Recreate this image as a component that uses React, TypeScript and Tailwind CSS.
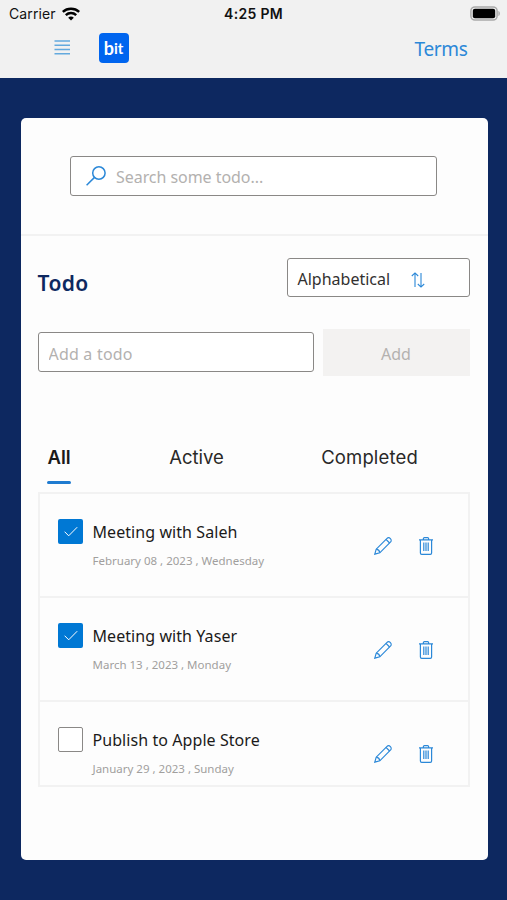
import React, { useState } from 'react';

interface Todo {
  id: number;
  title: string;
  date: string;
  done: boolean;
}

const initialTodos: Todo[] = [
  { id: 1, title: 'Meeting with Saleh', date: 'February 08 , 2023 , Wednesday', done: true },
  { id: 2, title: 'Meeting with Yaser', date: 'March 13 , 2023 , Monday', done: true },
  { id: 3, title: 'Publish to Apple Store', date: 'January 29 , 2023 , Sunday', done: false },
];

const WifiIcon = () => (
  <svg width="18" height="14" viewBox="0 0 18 14" fill="none" stroke="#000" strokeWidth="2.5">
    <path d="M0.8 4.9C5.3 0.7 12.7 0.7 17.2 4.9" />
    <path d="M3.8 8.1C6.8 5.4 11.2 5.4 14.2 8.1" />
    <path d="M9 13.4L6.2 10.7C7.8 9.2 10.2 9.2 11.8 10.7Z" fill="#000" stroke="none" />
  </svg>
);

const BatteryIcon = () => (
  <svg width="31" height="15" viewBox="0 0 31 15" fill="none">
    <rect x="0.9" y="0.9" width="26.2" height="13.2" rx="4" stroke="#a9a9a9" strokeWidth="1.5" />
    <rect x="2.8" y="2.8" width="22.4" height="9.4" rx="2" fill="#000" />
    <path d="M28.4 5C30.4 5.6 30.4 9.4 28.4 10Z" fill="#a9a9a9" />
  </svg>
);

const MenuIcon = () => (
  <svg width="16" height="16" viewBox="0 0 16 16" stroke="#63a9de" strokeWidth="1.5">
    <path d="M0.5 1H16M0.5 5.3H16M0.5 9.5H16M0.5 13.8H16" />
  </svg>
);

const SearchIcon = () => (
  <svg width="20" height="20" viewBox="0 0 20 20" fill="none" stroke="#2b88d8" strokeWidth="1.5">
    <circle cx="12.9" cy="7" r="6.2" />
    <path d="M8.5 11.4L0.6 19.3" />
  </svg>
);

const SortIcon = () => (
  <svg width="14" height="16" viewBox="0 0 14 16" fill="none" stroke="#2b88d8" strokeWidth="1.1">
    <path d="M4 15V1M0.8 4L4 0.9L7.2 4" />
    <path d="M10 1V15M6.8 12L10 15.1L13.2 12" />
  </svg>
);

const EditIcon = () => (
  <svg width="18" height="18" viewBox="0 0 18 18" fill="none" stroke="#2b88d8" strokeWidth="1.2">
    <path d="M0.8 17.2L2.2 12.2L12.8 1.6C13.8 0.6 15.4 0.6 16.4 1.6C17.4 2.6 17.4 4.2 16.4 5.2L5.8 15.8Z" />
    <path d="M12 2.4L15.6 6M2.2 12.2C4 12.4 5.6 14 5.8 15.8" />
  </svg>
);

const DeleteIcon = () => (
  <svg width="14" height="18" viewBox="0 0 14 18" fill="none" stroke="#2b88d8" strokeWidth="1.2">
    <path d="M0 2.9H14M4.4 2.9V1.6C4.4 1 4.8 0.7 5.4 0.7H8.6C9.2 0.7 9.6 1 9.6 1.6V2.9" />
    <path d="M1.4 2.9V16C1.4 16.8 1.9 17.3 2.7 17.3H11.3C12.1 17.3 12.6 16.8 12.6 16V2.9" />
    <path d="M4.8 5.6V14M7 5.6V14M9.2 5.6V14" />
  </svg>
);

const CheckIcon = () => (
  <svg width="14" height="11" viewBox="0 0 14 11" fill="none" stroke="#fff" strokeWidth="1">
    <path d="M0.6 5.7L4.7 9.8L13.2 1.2" />
  </svg>
);

const Header: React.FC = () => (
  <header className="h-[78px] bg-[#f1f1f1]">
    <div className="grid h-[27px] grid-cols-3 items-center pl-[9px] pr-[6px] font-['Inter',sans-serif] text-[14px] text-[#111]">
      <div className="flex items-center gap-[6px]">
        <span className="tracking-[0.1px]">Carrier</span>
        <WifiIcon />
      </div>
      <span className="-ml-[3px] text-center font-semibold tracking-[0.3px]">4:25 PM</span>
      <div className="flex justify-end">
        <BatteryIcon />
      </div>
    </div>
    <div className="flex h-[41px] items-center pl-[54px] pr-[39.5px]">
      <button><MenuIcon /></button>
      <div className="ml-[28.5px] flex h-[30px] w-[30px] items-center justify-center rounded-[4px] bg-[#0065ef] font-['Lato',sans-serif] font-bold leading-none text-white">
        <span className="text-[18px]">b</span>
        <span className="pt-[2px] text-[15px]">it</span>
      </div>
      <a href="#terms" className="ml-auto pt-[3px] text-[19px] tracking-[-0.35px] text-[#2b88d8]">Terms</a>
    </div>
  </header>
);

interface TodoItemProps {
  todo: Todo;
  last: boolean;
  onToggle: () => void;
}

const TodoItem: React.FC<TodoItemProps> = ({ todo, last, onToggle }) => (
  <li className={last ? 'flex h-[83px] pl-[18.5px] pr-[35px]' : 'flex h-[104px] border-b-2 border-[#f2f2f2] pl-[18.5px] pr-[35px]'}>
    <button
      onClick={onToggle}
      className={
        todo.done
          ? 'mt-[25px] flex h-[25px] w-[25px] items-center justify-center rounded-[2px] bg-[#0078d4]'
          : 'mt-[25px] h-[25px] w-[25px] rounded-[2px] border border-[#8a8886] bg-white'
      }
    >
      {todo.done && <CheckIcon />}
    </button>
    <div className="ml-[9.5px] pt-[26px]">
      <p className="whitespace-nowrap text-[16px] leading-6 tracking-[0.07px] text-[#1b1a19]">{todo.title}</p>
      <p className="mt-[9px] whitespace-nowrap text-[11.5px] leading-4 text-[#a19f9d]">{todo.date}</p>
    </div>
    <div className="ml-auto flex items-start gap-[26.5px] pt-[43px]">
      <button><EditIcon /></button>
      <button><DeleteIcon /></button>
    </div>
  </li>
);

const App: React.FC = () => {
  const [todos, setTodos] = useState(initialTodos);

  const toggle = (id: number) => {
    setTodos(todos.map((t) => (t.id === id ? { ...t, done: !t.done } : t)));
  };

  return (
    <div className="h-[900px] w-[507px] overflow-hidden bg-[#0d2860] font-['Noto_Sans',sans-serif]">
      <Header />
      <main className="ml-[20.5px] mt-[39.5px] h-[742px] w-[467px] rounded-[5px] bg-[#fdfdfd]">
        <div className="flex h-[118px] items-start border-b-2 border-[#f2f2f2] pl-[49.5px] pt-[38.5px]">
          <div className="flex h-10 w-[367px] items-center rounded-[3px] border-[1.5px] border-[#8a8886] bg-white pl-[15px]">
            <SearchIcon />
            <input
              className="ml-[10px] w-[300px] pt-[2px] text-[16px] tracking-[-0.05px] outline-none placeholder:text-[#b3b1af]"
              placeholder="Search some todo..."
            />
          </div>
        </div>

        <div className="pl-[17px] pr-[18px]">
          <div className="flex items-start justify-between pt-[22px]">
            <h1 className="pt-[11px] text-[21px] font-semibold leading-7 tracking-[0.4px] text-[#0d2860]">Todo</h1>
            <button className="flex h-[39px] w-[183px] items-center rounded-[3px] border-[1.5px] border-[#8a8886] bg-white pl-[10px] text-[16px] text-[#323130]">
              <span className="pt-[3px] tracking-[0px]">Alphabetical</span>
              <span className="ml-[21px] pt-[6px]"><SortIcon /></span>
            </button>
          </div>

          <div className="mt-8 flex h-[47px] items-center">
            <input
              className="h-10 w-[276px] rounded-[3px] border-[1.5px] border-[#8a8886] bg-white pl-[10px] pt-[3px] text-[16px] tracking-[0.2px] outline-none placeholder:text-[#b3b1af]"
              placeholder="Add a todo"
            />
            <button className="ml-[9px] h-[47px] w-[147px] bg-[#f3f2f1] pt-[3px] text-[16px] text-[#b3b1af]">Add</button>
          </div>

          <nav className="mt-[65px] flex h-[51px] items-start font-['Inter',sans-serif] text-[18.5px] leading-8 text-[#292827]">
            <button className="ml-[9.5px] flex h-[43px] w-6 flex-col items-center justify-between font-semibold text-[#1b1a19]">
              All
              <span className="h-[3px] w-6 rounded-full bg-[#1f7bd0]" />
            </button>
            <button className="ml-[98px] w-[55px]">Active</button>
            <button className="ml-[96.5px] w-[98px] tracking-[0.15px]">Completed</button>
          </nav>

          <ul className="border-2 border-[#f2f2f2]">
            {todos.map((todo, i) => (
              <TodoItem key={todo.id} todo={todo} last={i === todos.length - 1} onToggle={() => toggle(todo.id)} />
            ))}
          </ul>
        </div>
      </main>
    </div>
  );
};

export default App;
